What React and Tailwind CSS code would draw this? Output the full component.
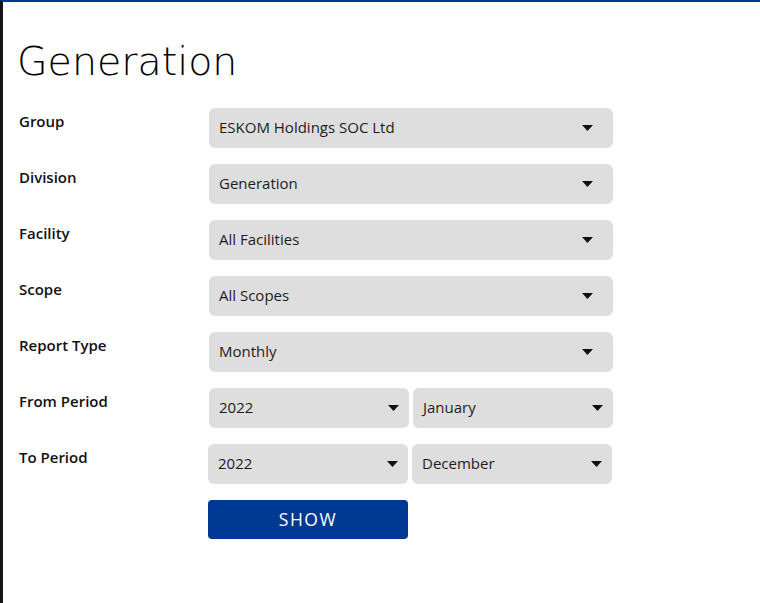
const rows = [
  { label: "Group", value: "ESKOM Holdings SOC Ltd" },
  { label: "Division", value: "Generation" },
  { label: "Facility", value: "All Facilities" },
  { label: "Scope", value: "All Scopes" },
  { label: "Report Type", value: "Monthly" },
];

function Caret() {
  return (
    <svg width="11" height="6" viewBox="0 0 11 6" className="shrink-0">
      <path d="M0 0h11L5.5 6z" fill="#111" />
    </svg>
  );
}

function Select({ value, width, pr }) {
  return (
    <div className={`flex h-10 items-center justify-between rounded-md bg-[#dfdedf] pl-[10px] text-[15px] text-[#1c1c1c] ${width} ${pr}`}>
      <span className="-mt-px">{value}</span>
      <Caret />
    </div>
  );
}

function Label({ children }) {
  return <div className="w-[190px] pt-[2px] text-[15px] font-semibold text-[#111]">{children}</div>;
}

export default function App() {
  return (
    <div
      className="min-h-screen border-l-[3px] border-t-2 border-l-[#151515] border-t-[#003994] bg-white pl-[16px]"
      style={{ fontFamily: '"Open Sans", "Liberation Sans", sans-serif' }}
    >
      <h1
        className="-ml-[2px] pt-[34px] text-[39.5px] font-extralight leading-[50px] text-black"
        style={{ fontFamily: '"DejaVu Sans", sans-serif' }}
      >
        Generation
      </h1>
      <div className="mt-[22px] flex flex-col gap-4">
        {rows.map((r) => (
          <div key={r.label} className="flex">
            <Label>{r.label}</Label>
            <Select value={r.value} width="w-[404px]" pr="pr-[20px]" />
          </div>
        ))}
        <div className="flex">
          <Label>From Period</Label>
          <div className="flex gap-1">
            <Select value="2022" width="w-[200px]" pr="pr-[10px]" />
            <Select value="January" width="w-[200px]" pr="pr-[10px]" />
          </div>
        </div>
        <div className="flex">
          <Label>To Period</Label>
          <div className="-ml-px flex gap-1">
            <Select value="2022" width="w-[200px]" pr="pr-[10px]" />
            <Select value="December" width="w-[200px]" pr="pr-[10px]" />
          </div>
        </div>
        <div className="flex">
          <div className="w-[189px]" />
          <button className="h-[39px] w-[200px] rounded-[4px] bg-[#003994] text-[17.5px] font-normal tracking-[1.5px] text-white">
            SHOW
          </button>
        </div>
      </div>
    </div>
  );
}
